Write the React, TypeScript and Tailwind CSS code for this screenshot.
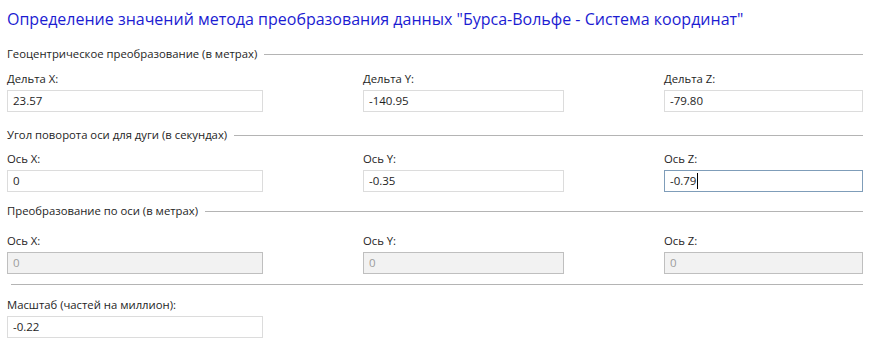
import type { ReactNode } from 'react'

const font = { fontFamily: '"Open Sans", "Noto Sans", sans-serif' }

type Field = { label: string; value: string; disabled?: boolean; focused?: boolean }

function SectionHeader({ title }: { title: string }) {
  return (
    <div className="flex items-center h-[20px] pl-[7px] pr-[15px]">
      <span className="text-[11.3px] text-[#1e1e1e] whitespace-nowrap">{title}</span>
      <div className="flex-1 h-px bg-[#b4b4b4] ml-[7px] mt-px" />
    </div>
  )
}

function Box({ field, width }: { field: Field; width: string }) {
  const base = `h-[22px] border flex items-center px-[5px] text-[11.5px] ${width}`
  const look = field.disabled
    ? 'bg-[#f2f2f2] border-[#bfbfbf] text-[#9d9d9d]'
    : field.focused
      ? 'bg-white border-[#7f9db9] text-[#1e1e1e]'
      : 'bg-white border-[#dcdcdc] text-[#1e1e1e]'
  return (
    <div className={`${base} ${look}`}>
      <span>{field.value}</span>
      {field.focused && <span className="w-px h-[16px] bg-black ml-px" />}
    </div>
  )
}

function Row({ fields }: { fields: Field[] }) {
  const widths = ['w-[256px]', 'w-[201px]', 'w-[199px]']
  return (
    <div className="grid grid-cols-[356px_301px_199px] pl-[7px]">
      {fields.map((f, i) => (
        <div key={i} className="flex flex-col">
          <span className="text-[11.3px] text-[#1e1e1e] h-[16px] leading-[16px] mb-[3px]">{f.label}</span>
          <Box field={f} width={widths[i]} />
        </div>
      ))}
    </div>
  )
}

function Section({ title, children, gap }: { title: string; children: ReactNode; gap: string }) {
  return (
    <div className="flex flex-col">
      <SectionHeader title={title} />
      <div className={gap}>{children}</div>
    </div>
  )
}

export default function App() {
  return (
    <div className="w-[878px] h-[356px] bg-white overflow-hidden" style={font}>
      <div className="h-[38px] flex items-center pl-[7px]">
        <h1 className="text-[16px] text-[#1c1cd2] whitespace-nowrap">
          Определение значений метода преобразования данных "Бурса-Вольфе - Система координат"
        </h1>
      </div>

      <div className="mt-[6px]">
        <Section title="Геоцентрическое преобразование (в метрах)" gap="mt-[7px]">
          <Row
            fields={[
              { label: 'Дельта X:', value: '23.57' },
              { label: 'Дельта Y:', value: '-140.95' },
              { label: 'Дельта Z:', value: '-79.80' },
            ]}
          />
        </Section>
      </div>

      <div className="mt-[13px]">
        <Section title="Угол поворота оси для дуги (в секундах)" gap="mt-[6px]">
          <Row
            fields={[
              { label: 'Ось X:', value: '0' },
              { label: 'Ось Y:', value: '-0.35' },
              { label: 'Ось Z:', value: '-0.79', focused: true },
            ]}
          />
        </Section>
      </div>

      <div className="mt-[9px]">
        <Section title="Преобразование по оси (в метрах)" gap="mt-[12px]">
          <Row
            fields={[
              { label: 'Ось X:', value: '0', disabled: true },
              { label: 'Ось Y:', value: '0', disabled: true },
              { label: 'Ось Z:', value: '0', disabled: true },
            ]}
          />
        </Section>
      </div>

      <div className="ml-[11px] mr-[15px] mt-[10px] h-px bg-[#b4b4b4]" />

      <div className="pl-[7px] mt-[12px] flex flex-col">
        <span className="text-[11.3px] text-[#1e1e1e] h-[16px] leading-[16px] mb-[3px]">
          Масштаб (частей на миллион):
        </span>
        <Box field={{ label: '', value: '-0.22' }} width="w-[256px]" />
      </div>
    </div>
  )
}
